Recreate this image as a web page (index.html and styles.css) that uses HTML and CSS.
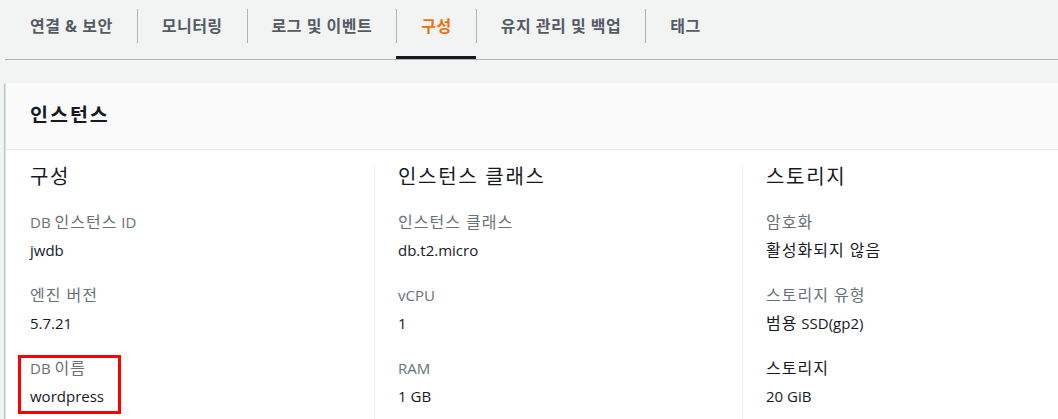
FILE: index.html
```html
<!DOCTYPE html>
<html lang="ko">
<head>
<meta charset="utf-8">
<title>구성</title>
<link rel="stylesheet" href="styles.css">
</head>
<body>
<nav class="tabs">
  <div class="tab"><span class="tab-label">연결 &amp; 보안</span></div>
  <div class="tab"><span class="tab-label sep">모니터링</span></div>
  <div class="tab"><span class="tab-label sep">로그 및 이벤트</span></div>
  <div class="tab active"><span class="tab-label sep">구성</span></div>
  <div class="tab"><span class="tab-label sep">유지 관리 및 백업</span></div>
  <div class="tab"><span class="tab-label sep">태그</span></div>
</nav>
<section class="card">
  <header class="card-header"><h2 class="card-title">인스턴스</h2></header>
  <div class="card-body">
    <div class="col">
      <h3 class="col-title">구성</h3>
      <div class="item"><div class="label">DB <span class="ko">인스턴스</span> ID</div><div class="value">jwdb</div></div>
      <div class="item"><div class="label"><span class="ko">엔진 버전</span></div><div class="value">5.7.21</div></div>
      <div class="item highlight"><div class="label">DB <span class="ko">이름</span></div><div class="value">wordpress</div><span class="annot"></span></div>
    </div>
    <div class="col sep-col">
      <h3 class="col-title">인스턴스 클래스</h3>
      <div class="item"><div class="label"><span class="ko">인스턴스 클래스</span></div><div class="value">db.t2.micro</div></div>
      <div class="item"><div class="label">vCPU</div><div class="value">1</div></div>
      <div class="item"><div class="label">RAM</div><div class="value">1 GB</div></div>
    </div>
    <div class="col sep-col">
      <h3 class="col-title">스토리지</h3>
      <div class="item"><div class="label"><span class="ko">암호화</span></div><div class="value"><span class="ko">활성화되지 않음</span></div></div>
      <div class="item"><div class="label"><span class="ko">스토리지 유형</span></div><div class="value"><span class="ko">범용</span> SSD(gp2)</div></div>
      <div class="item"><div class="label dark"><span class="ko">스토리지</span></div><div class="value">20 GiB</div></div>
    </div>
  </div>
</section>
</body>
</html>
```
FILE: styles.css
```css
html, body {
  margin: 0;
  padding: 0;
}
body {
  background: #f2f3f3;
  font-family: "Open Sans", "Noto Sans CJK KR", sans-serif;
  color: #16191f;
  width: 1058px;
  height: 419px;
  overflow: hidden;
}
.tabs {
  display: flex;
  margin-left: 5px;
  padding-left: 1px;
  border-bottom: 1px solid #aab7b8;
  width: 1200px;
}
.tab {
  padding-top: 9px;
  border-bottom: 3px solid transparent;
}
.tab.active {
  border-bottom-color: #16191f;
}
.tab-label {
  display: block;
  height: 34px;
  line-height: 34px;
  margin-bottom: 13px;
  padding: 0 24px;
  font-size: 16px;
  font-weight: 700;
  letter-spacing: 0.5px;
  color: #545b64;
  white-space: nowrap;
}
.tab-label.sep {
  border-left: 1px solid #aab7b8;
}
.tab.active .tab-label {
  color: #ec7211;
}
.card {
  margin: 23px 0 0 5px;
  width: 1200px;
  background: #fff;
  box-shadow: 0 1px 1px 0 rgba(0, 28, 36, 0.3), -1px 1px 1px 0 rgba(0, 28, 36, 0.15);
  border-left: 1px solid #dcdfe0;
}
.card-header {
  background: #fafafa;
  border-bottom: 1px solid #eaeded;
  padding: 19px 24px 21px;
}
.card-title {
  margin: 0;
  font-size: 19.5px;
  line-height: 26px;
  font-weight: 700;
  letter-spacing: 2px;
  color: #16191f;
}
.card-body {
  display: grid;
  grid-template-columns: 368px 368px 368px;
  padding-top: 17px;
}
.col {
  padding-left: 24px;
}
.sep-col {
  border-left: 1px solid #eaeded;
  padding-left: 23px;
}
.col-title {
  margin: 0 0 21px;
  font-size: 20px;
  line-height: 20px;
  font-weight: 400;
  letter-spacing: 1.7px;
  color: #16191f;
}
.item {
  margin-bottom: 17px;
  position: relative;
}
.label {
  font-size: 15px;
  line-height: 28px;
  color: #687078;
  white-space: nowrap;
}
.label.dark {
  color: #16191f;
}
.value {
  font-size: 15px;
  line-height: 28px;
  color: #16191f;
  white-space: nowrap;
}
.ko {
  font-size: 16px;
  letter-spacing: 1px;
}
.annot {
  position: absolute;
  left: -12px;
  top: 1px;
  width: 97px;
  height: 53px;
  border: 3px solid #ff0000;
}
```
